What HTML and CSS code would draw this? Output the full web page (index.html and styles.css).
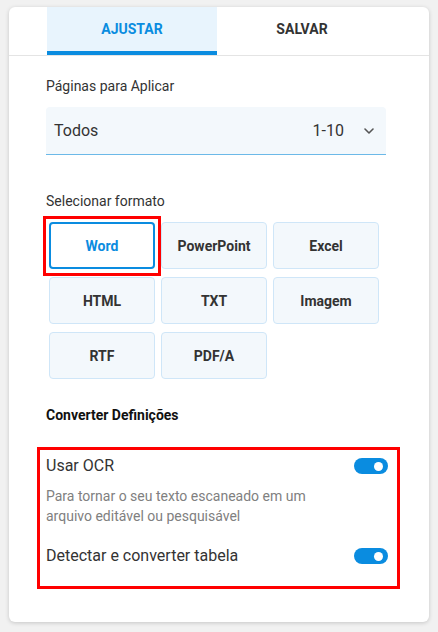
FILE: index.html
```html
<!DOCTYPE html>
<html lang="pt">
<head>
    <meta charset="UTF-8">
    <meta name="viewport" content="width=device-width, initial-scale=1.0">
    <title>Converter</title>
    <link rel="stylesheet" href="styles.css">
</head>
<body>
    <div class="card">
        <div class="tabs">
            <div class="tab active">AJUSTAR</div>
            <div class="tab">SALVAR</div>
        </div>
        <div class="content">
            <div class="label">Páginas para Aplicar</div>
            <div class="select">
                <span class="select-value">Todos</span>
                <span class="select-range">1-10</span>
                <svg class="chevron" width="10" height="6" viewBox="0 0 10 6">
                    <path d="M1 1l4 4 4-4" fill="none" stroke="#555" stroke-width="1.6" stroke-linecap="round" stroke-linejoin="round"/>
                </svg>
            </div>

            <div class="label label-format">Selecionar formato</div>
            <div class="formats">
                <div class="format selected">Word</div>
                <div class="format">PowerPoint</div>
                <div class="format">Excel</div>
                <div class="format">HTML</div>
                <div class="format">TXT</div>
                <div class="format">Imagem</div>
                <div class="format">RTF</div>
                <div class="format">PDF/A</div>
            </div>

            <div class="label label-settings">Converter Definições</div>
        </div>
        <div class="settings">
            <div class="setting">
                <span>Usar OCR</span>
                <span class="toggle"></span>
            </div>
            <div class="setting-desc">Para tornar o seu texto escaneado em um<br>arquivo editável ou pesquisável</div>
            <div class="setting setting-table">
                <span>Detectar e converter tabela</span>
                <span class="toggle"></span>
            </div>
        </div>
    </div>
</body>
</html>
```

FILE: styles.css
```css
body {
    margin: 0;
    padding: 7px 9px;
    background-color: #f1f1f1;
    font-family: Roboto, "Liberation Sans", Arial, sans-serif;
    color: #333;
}
.card {
    width: 420px;
    height: 615px;
    box-sizing: border-box;
    background-color: #fff;
    border-radius: 6px;
    box-shadow: 0 1px 4px rgba(0,0,0,0.18);
    overflow: hidden;
}
.tabs {
    display: flex;
    padding-left: 38px;
    border-bottom: 1px solid #e4e4e4;
}
.tab {
    width: 170px;
    height: 44px;
    border-bottom: 4px solid transparent;
    display: flex;
    align-items: center;
    justify-content: center;
    font-size: 14px;
    font-weight: bold;
    color: #333;
}
.tab.active {
    background-color: #e8f4fd;
    border-bottom-color: #0a8ce0;
    color: #0a8ce0;
}
.content {
    padding: 20px 43px 0 37px;
}
.label {
    font-size: 14px;
    line-height: 20px;
    color: #333;
}
.select {
    margin-top: 11px;
    height: 47px;
    background-color: #f3f8fc;
    border-bottom: 1px solid #6cb9e8;
    border-radius: 4px 4px 0 0;
    display: flex;
    align-items: center;
    padding: 0 9px 0 8px;
    font-size: 16px;
    color: #333;
}
.select-value {
    flex: 1;
}
.select-range {
    margin-right: 20px;
}
.chevron {
    margin-right: 3px;
}
.label-format {
    margin-top: 36px;
}
.formats {
    margin: 11px 0 0 3px;
    display: grid;
    grid-template-columns: repeat(3, 106px);
    grid-auto-rows: 47px;
    column-gap: 6px;
    row-gap: 8px;
}
.format {
    position: relative;
    box-sizing: border-box;
    background-color: #f3f8fc;
    border: 1px solid #cfe6f8;
    border-radius: 4px;
    display: flex;
    align-items: center;
    justify-content: center;
    font-size: 14px;
    font-weight: bold;
    color: #333;
}
.format.selected {
    background-color: #fff;
    border: 2px solid #0a8ce0;
    color: #0a8ce0;
}
/* red highlight frame around the chosen format */
.format.selected::before {
    content: "";
    position: absolute;
    left: -8px;
    top: -8px;
    right: -8px;
    bottom: -9px;
    border: 3px solid #ff0000;
}
.label-settings {
    margin-top: 26px;
    font-weight: bold;
    color: #111;
}
.settings {
    margin: 22px 29px 0 28px;
    border: 3px solid #ff0000;
    padding: 4px 9px 18px 6px;
}
.setting {
    display: flex;
    align-items: center;
    justify-content: space-between;
    font-size: 16px;
    line-height: 24px;
    color: #333;
}
.setting-desc {
    margin-top: 8px;
    font-size: 14px;
    line-height: 20px;
    color: #808080;
}
.setting-table {
    margin-top: 18px;
}
.toggle {
    position: relative;
    width: 34px;
    height: 16px;
    border-radius: 8px;
    background-color: #0a8ce0;
}
.toggle::after {
    content: "";
    position: absolute;
    right: 5px;
    top: 3.5px;
    width: 9px;
    height: 9px;
    border-radius: 50%;
    background-color: #fff;
}
```
